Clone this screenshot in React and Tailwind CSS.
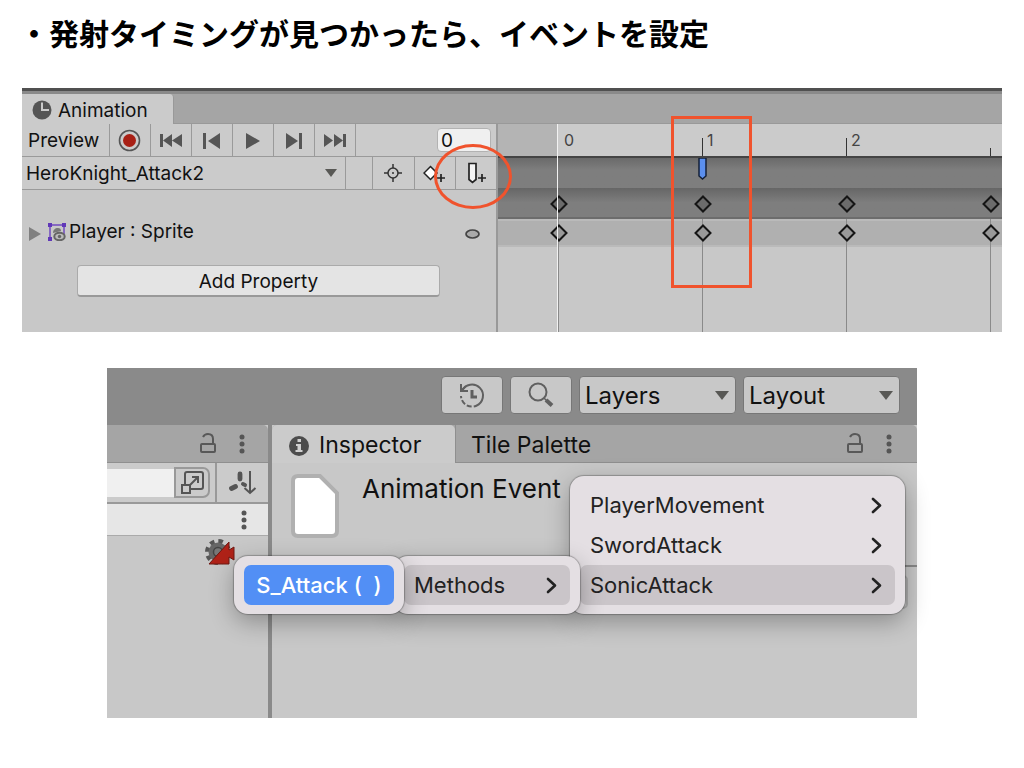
import React, { useState } from 'react';

const transport = [
  { label: 'First frame', d: 'M1 3h3v13H1zM13 3v13L4 9.500zM23 3v13l-10-6.500z' },
  { label: 'Previous frame', d: 'M3 2h3v16H3zM20 2v16L8 10z' },
  { label: 'Play', d: 'M5 2v16l14-8z' },
  { label: 'Next frame', d: 'M4 2v16l12-8zM17 2h3v16h-3z' },
  { label: 'Last frame', d: 'M1 3v13l9-6.500zM11 3v13l9-6.500zM20 3h3v13h-3z' },
];

const scripts = ['PlayerMovement', 'SwordAttack', 'SonicAttack'];

const toolButton = 'flex items-center justify-center border-l border-[#9a9a9a]';

const Arrow = ({ className }) => (
  <svg className={className} width="14" height="9" viewBox="0 0 14 9" aria-hidden="true">
    <path d="M0 0h14L7 9z" fill="#585855" />
  </svg>
);

const SmallArrow = ({ className }) => (
  <svg className={className} width="12" height="8" viewBox="0 0 12 8" aria-hidden="true">
    <path d="M0 0h12L6 8z" fill="#585855" />
  </svg>
);

const Dropdown = ({ label, options, className, selectClass, arrowClass, ArrowIcon = Arrow }) => (
  <div className={`relative flex items-center ${className}`}>
    <select
      aria-label={label}
      className={`h-full w-full appearance-none bg-transparent text-[#111] outline-none ${selectClass}`}
    >
      {options.map((option) => (
        <option key={option}>{option}</option>
      ))}
    </select>
    <ArrowIcon className={`pointer-events-none absolute ${arrowClass}`} />
  </div>
);

const Lock = () => (
  <svg width="18" height="22" viewBox="0 0 18 22" fill="none" stroke="#585858" strokeWidth="2" aria-hidden="true">
    <rect x="2" y="11" width="14" height="8" rx="1" />
    <path d="M4 4c1-2 3-3 5-3 3 0 5 2 5 5v5" />
  </svg>
);

const Dots = () => (
  <svg width="6" height="20" viewBox="0 0 6 20" fill="#555" aria-hidden="true">
    <circle cx="3" cy="3" r="2.500" />
    <circle cx="3" cy="10" r="2.500" />
    <circle cx="3" cy="17" r="2.500" />
  </svg>
);

const PaneActions = () => (
  <div className="ml-auto flex items-center gap-[22px]">
    <button aria-label="Lock"><Lock /></button>
    <button aria-label="More"><Dots /></button>
  </div>
);

const Key = ({ fill }) => (
  <svg className="relative -ml-2 shrink-0" width="18" height="18" viewBox="0 0 18 18" aria-hidden="true">
    <path d="M9 1.500l7.500 7.500L9 16.500 1.500 9z" fill={fill} stroke="#151515" strokeWidth="2" />
  </svg>
);

const KeyRow = ({ fill, className }) => (
  <div className={`flex items-center pl-[60px] ${className}`}>
    {[0, 1, 2, 3].map((frame) => (
      <div key={frame} className="flex w-36 shrink-0">
        <Key fill={fill} />
      </div>
    ))}
  </div>
);

const Chevron = () => (
  <svg width="12" height="18" viewBox="0 0 12 18" fill="none" stroke="#222" strokeWidth="2.600" strokeLinecap="round" strokeLinejoin="round" aria-hidden="true">
    <path d="M3 3l7 6.500L3 16" />
  </svg>
);

const Menu = ({ className, children }) => (
  <div
    role="menu"
    className={`relative rounded-[14px] bg-[#e4dfe3] px-[10px] py-[9px] shadow-[0_0_1px_1px_rgba(0,0,0,0.25),0_8px_24px_rgba(0,0,0,0.3)] ${className}`}
  >
    {children}
  </div>
);

const Timeline = () => (
  <div className="relative flex min-w-0 flex-1 flex-col overflow-hidden bg-[#c8c8c8]">
    <div className="flex h-[34px] border-b-2 border-[#444] bg-[#cbcbcb] text-base text-[#444]">
      <div className="w-[60px] shrink-0 bg-[#b4b4b4]" />
      <div className="w-36 shrink-0 pt-1 pl-[6px]">0</div>
      <div className="flex w-36 shrink-0 items-end">
        <span className="h-[18px] w-px bg-[#333]" />
        <span className="self-start pt-1 pl-1">1</span>
      </div>
      <div className="flex w-36 shrink-0 items-end">
        <span className="h-[18px] w-px bg-[#333]" />
        <span className="self-start pt-1 pl-1">2</span>
      </div>
      <div className="flex items-end">
        <span className="h-2 w-px bg-[#333]" />
      </div>
    </div>
    <div className="relative flex flex-1 flex-col">
      {/* frame lines run behind the keys */}
      <div className="absolute inset-0 flex pt-[60px] pl-[60px]">
        {[0, 1, 2, 3].map((frame) => (
          <div key={frame} className="relative z-10 w-36 shrink-0 border-l border-[#8a8a8a]" />
        ))}
      </div>
      <div className="flex h-[30px] bg-linear-to-b from-[#6a6a6a] to-[#7e7e7e] to-40% pl-[204px]">
        <svg className="-ml-1" width="9" height="22" viewBox="0 0 9 22" aria-hidden="true">
          <path d="M1 0v18l3.500 3 3.500-3V0z" fill="#5b8fee" stroke="#142038" strokeWidth="1.500" />
        </svg>
      </div>
      <KeyRow fill="#6b6b6b" className="relative z-20 h-[31px] border-b-2 border-[#6c6c6c] bg-linear-to-b from-[#666] to-[#7e7e7e] to-50% pt-[2px]" />
      <div className="h-7 border-t-2 border-b-2 border-t-[#bababa] border-b-[#bababa] bg-[#b0b0b0]" />
      <KeyRow fill="#999" className="relative z-20 -mt-7 h-7" />
    </div>
    <div className="absolute inset-y-0 left-[59px] z-30 w-px bg-[#f2f2f2]" />
  </div>
);

const AnimationWindow = () => {
  const [frame, setFrame] = useState('0');

  return (
    <section className="relative flex h-[244px] flex-col bg-[#c8c8c8] text-[19px] text-[#111]">
      <div className="h-[6px] border-t-[3px] border-[#505050] bg-[#8a8a8a]" />
      <div className="flex h-[30px] bg-[#a5a5a5]">
        <div className="flex w-[152px] items-center gap-[6px] rounded-tr-[4px] border-r border-[#999] bg-[#cbcbcb] pt-1 pl-[10px]">
          <svg width="20" height="20" viewBox="0 0 20 20" className="-mt-[2px]" aria-hidden="true">
            <circle cx="10" cy="10" r="9.500" fill="#555" />
            <path d="M10 2.500V10h7" fill="none" stroke="#cbcbcb" strokeWidth="2" />
          </svg>
          Animation
        </div>
        <div className="flex-1 border-b border-[#999]" />
      </div>
      <div className="flex min-h-0 flex-1">
        <div className="w-[476px] shrink-0 border-r-2 border-[#999]">
          <div className="flex h-[33px] border-b border-[#9a9a9a] bg-[#cbcbcb]">
            <button className="w-[87px] pt-[2px] pl-[6px] text-left">Preview</button>
            <button aria-label="Record" className={`w-[41px] ${toolButton}`}>
              <svg width="24" height="24" viewBox="0 0 24 24" aria-hidden="true">
                <circle cx="11.500" cy="12.500" r="10" fill="none" stroke="#555" strokeWidth="1.600" />
                <circle cx="11.500" cy="12.500" r="6.500" fill="#a82015" />
              </svg>
            </button>
            {transport.map(({ label, d }) => (
              <button key={label} aria-label={label} className={`w-[41px] ${toolButton}`}>
                <svg width="24" height="18" viewBox="0 0 24 18" fill="#555" aria-hidden="true">
                  <path d={d} />
                </svg>
              </button>
            ))}
            <div className="flex flex-1 items-center justify-end border-l border-[#9a9a9a] pr-[5px]">
              <input
                aria-label="Frame"
                value={frame}
                onChange={(e) => setFrame(e.target.value)}
                className="h-6 w-[54px] rounded-[4px] border border-[#b2b2b2] bg-[#f0f0f0] px-[3px] pt-[2px] outline-none"
              />
            </div>
          </div>
          <div className="flex h-[33px] border-b border-[#9a9a9a] bg-[#cbcbcb]">
            <Dropdown
              label="Clip"
              options={['HeroKnight_Attack2']}
              className="w-[323px]"
              selectClass="pt-[2px] pl-1"
              arrowClass="right-2"
              ArrowIcon={SmallArrow}
            />
            <div className="flex-1 border-l border-[#9a9a9a]" />
            <button aria-label="Filter by selection" className={`w-[42px] ${toolButton}`}>
              <svg width="20" height="18" viewBox="0 0 20 18" fill="none" stroke="#333" strokeWidth="1.500" aria-hidden="true">
                <circle cx="9" cy="9" r="5" />
                <path d="M9 0v4M9 14v4M0 9h4M14 9h4" />
                <circle cx="9" cy="9" r="1" fill="#333" stroke="none" />
              </svg>
            </button>
            <button aria-label="Add keyframe" className={`w-[41px] ${toolButton}`}>
              <svg width="24" height="20" viewBox="0 0 24 20" stroke="#222" strokeWidth="1.500" aria-hidden="true">
                <path d="M7.500 3.500l6.500 6.500-6.500 6.500L1 10z" fill="#fff" />
                <path d="M18 11v8M14 15h8" strokeWidth="1.700" />
              </svg>
            </button>
            <button aria-label="Add event" className={`w-[41px] ${toolButton}`}>
              <svg width="24" height="22" viewBox="0 0 24 22" stroke="#222" strokeWidth="1.700" aria-hidden="true">
                <path d="M5 1.500h7v16L8.500 20.500 5 17.500z" fill="#f4f4f4" />
                <path d="M18 12v8M14 16h8" strokeWidth="1.700" />
              </svg>
            </button>
          </div>
          <div className="flex items-center pt-7 pr-4 pl-[7px]">
            <svg width="12" height="14" viewBox="0 0 12 14" className="mt-1" aria-hidden="true">
              <path d="M0 0l12 7-12 7z" fill="#808080" />
            </svg>
            <svg width="18" height="18" viewBox="0 0 18 18" className="mr-[3px] ml-[7px]" aria-hidden="true">
              <path d="M2 2h14v9M2 2v14" fill="none" stroke="#7048c0" strokeWidth="1.500" />
              <path d="M0 0h4v4H0zM14 0h4v4h-4zM0 14h4v4H0z" fill="#6038b8" />
              <path d="M5 10c0-3 2-5 5-5 2 0 3 1 3 3z" fill="#777" />
              <ellipse cx="11.500" cy="13.500" rx="5.200" ry="3.800" fill="#bbb" stroke="#666" strokeWidth="2" />
              <circle cx="11.500" cy="13.500" r="1.700" fill="#666" />
            </svg>
            <span>Player : Sprite</span>
            <svg width="15" height="10" viewBox="0 0 15 10" className="mt-[3px] ml-auto" aria-hidden="true">
              <ellipse cx="7.500" cy="5" rx="6.500" ry="4" fill="#aaa" stroke="#444" strokeWidth="1.700" />
            </svg>
          </div>
          <button className="mt-[18px] ml-[55px] h-8 w-[363px] rounded-[4px] border border-b-2 border-[#aaa] border-b-[#999] bg-[#e4e4e4] pt-[2px]">
            Add Property
          </button>
        </div>
        <Timeline />
      </div>
      {/* callouts */}
      <div className="pointer-events-none absolute top-14 left-[412px] z-40 h-[65px] w-[78px] rounded-[50%] border-[3px] border-[#f0532d]" />
      <div className="pointer-events-none absolute top-7 left-[649px] z-40 h-[172px] w-[81px] border-[3px] border-[#f0532d]" />
    </section>
  );
};

const HierarchyPane = () => (
  <div className="w-[165px] shrink-0 border-r-4 border-[#8a8a8a] bg-[#c8c8c8]">
    <div className="flex h-[38px] items-center rounded-tr-[5px] border-b border-[#8f8f8f] bg-[#a5a5a5] pr-[23px]">
      <PaneActions />
    </div>
    <div className="flex h-[41px] items-center border-b-2 border-[#999] bg-[#cbcbcb]">
      <input aria-label="Search hierarchy" className="h-7 w-[67px] bg-[#f0f0f0] outline-none" />
      <button aria-label="Open search" className="flex h-[31px] w-9 items-center justify-center rounded-r-[7px] border-2 border-[#999]">
        <svg width="25" height="25" viewBox="0 0 25 25" fill="none" stroke="#555" strokeWidth="2" aria-hidden="true">
          <path d="M5 14V4q0-2 2-2h14q2 0 2 2v13q0 2-2 2H11" />
          <path d="M2 15h8v8H2zM10 15l8-8M12 7h6v6" />
        </svg>
      </button>
      <button aria-label="Sort" className="ml-[5px] flex h-full flex-1 items-center justify-center border-l-2 border-[#999]">
        <svg width="32" height="26" viewBox="0 0 32 26" fill="none" stroke="#555" aria-hidden="true">
          <path d="M13 4v5M4.500 18.500l4-2" strokeWidth="4.800" strokeLinecap="round" />
          <path d="M16 14l2 1" strokeWidth="4" strokeLinecap="round" />
          <path d="M23 1v22M17.500 18l5.500 5 5.500-5" strokeWidth="2" />
        </svg>
      </button>
    </div>
    <div className="flex h-8 items-center justify-end border-b border-[#aaa] bg-[#e6e6e6] pr-[21px]">
      <button aria-label="Scene options"><Dots /></button>
    </div>
    <div className="flex justify-end pt-[2px] pr-[32px]">
      <svg width="32" height="28" viewBox="0 0 32 28" aria-hidden="true">
        <circle cx="14" cy="14" r="10.500" fill="none" stroke="#555" strokeWidth="5" strokeDasharray="4.400 3.850" />
        <circle cx="14" cy="14" r="9.500" fill="#666" />
        <circle cx="14" cy="14" r="4.500" fill="#777" stroke="#444" strokeWidth="1.500" />
        <path d="M5 26L25 4v8l5-3v13l-5-3v7z" fill="#b02218" stroke="#6e1812" />
      </svg>
    </div>
  </div>
);

const EventMenu = () => (
  <div className="absolute top-[108px] right-3 flex items-end text-[22px] text-[#222]">
    <Menu className="z-30 -mr-[10px] w-[170px]">
      <button role="menuitem" className="h-10 w-full rounded-[7px] bg-[#528ff5] font-medium whitespace-pre text-white">
        {'S_Attack (  )'}
      </button>
    </Menu>
    <Menu className="z-20 -mr-[10px] w-[186px]">
      <button role="menuitem" className="flex h-10 w-full items-center justify-between rounded-[7px] bg-[#cac5c9] pr-[13px] pl-[10px]">
        Methods
        <Chevron />
      </button>
    </Menu>
    <Menu className="z-10 w-[335px]">
      {scripts.map((name) => (
        <button
          key={name}
          role="menuitem"
          className={`flex h-10 w-full items-center justify-between rounded-[7px] pr-[13px] pl-[10px] ${
            name === 'SonicAttack' ? 'bg-[#cac5c9]' : ''
          }`}
        >
          {name}
          <Chevron />
        </button>
      ))}
    </Menu>
  </div>
);

const InspectorPane = () => (
  <div className="min-w-0 flex-1 bg-[#c8c8c8]">
    <div className="flex h-[38px] rounded-t-[5px] bg-[#a5a5a5] text-[23px]">
      <div className="flex w-[183px] items-center gap-[10px] rounded-t-[5px] bg-[#cbcbcb] pt-[3px] pl-[17px]">
        <svg width="20" height="20" viewBox="0 0 20 20" aria-hidden="true">
          <circle cx="10" cy="10" r="10" fill="#4c4c4c" />
          <path d="M8.500 3h3.500v3H8.500zM7 8h5v6h1.500v2h-7v-2h2v-4H7z" fill="#d0d0d0" />
        </svg>
        Inspector
      </div>
      <div className="flex flex-1 items-center border-b border-l border-[#8f8f8f] pr-[25px] pl-[15px]">
        <span className="pt-1">Tile Palette</span>
        <PaneActions />
      </div>
    </div>
    <div className="flex h-[104px] border-b-2 border-[#888] pt-[11px] pl-[19px]">
      <svg width="48" height="64" viewBox="0 0 48 64" aria-hidden="true">
        <path d="M7 2h22l17 17v38q0 5-5 5H7q-5 0-5-5V7q0-5 5-5z" fill="#fff" stroke="#b0b0b0" strokeWidth="4" />
      </svg>
      <h2 className="ml-[23px] text-[26px] leading-[30px]">Animation Event</h2>
    </div>
    <div className="mt-2 mr-[9px] ml-4 h-[34px] rounded-[5px] border-2 border-[#aaa]" />
  </div>
);

const InspectorWindow = () => (
  <section className="relative mx-[85px] mt-9 flex h-[350px] flex-col bg-[#8a8a8a] text-[22px] text-[#111]">
    <div className="flex h-[57px] items-center justify-end gap-[7px] pr-[17px] pb-[3px]">
      <button aria-label="Undo history" className="flex h-[38px] w-[62px] items-center justify-center rounded-[4px] border border-[#777] bg-[#c8c8c8]">
        <svg width="26" height="26" viewBox="0 0 26 26" fill="none" stroke="#606060" strokeWidth="2" aria-hidden="true">
          <path d="M3 9A11 11 0 1 1 2 14" strokeDasharray="45 2 5 2 5 2 5 2" />
          <path d="M2 2v7h7M2 9l5-5" />
          <path d="M13 8v7h5" strokeWidth="3" />
        </svg>
      </button>
      <button aria-label="Search" className="flex h-[38px] w-[62px] items-center justify-center rounded-[4px] border border-[#777] bg-[#c8c8c8]">
        <svg width="26" height="26" viewBox="0 0 26 26" fill="none" stroke="#606060" aria-hidden="true">
          <circle cx="10" cy="10" r="8.500" strokeWidth="2" />
          <path d="M16 16l3 3" strokeWidth="1.500" />
          <path d="M18 18l6 5.500" strokeWidth="4" />
        </svg>
      </button>
      <Dropdown
        label="Layers"
        options={['Layers']}
        className="h-[38px] w-[157px] rounded-[4px] border border-[#777] bg-[#c8c8c8] text-2xl"
        selectClass="pt-[2px] pl-[5px]"
        arrowClass="right-[6px]"
      />
      <Dropdown
        label="Layout"
        options={['Layout']}
        className="h-[38px] w-[157px] rounded-[4px] border border-[#777] bg-[#c8c8c8] text-2xl"
        selectClass="pt-[2px] pl-[5px]"
        arrowClass="right-[6px]"
      />
    </div>
    <div className="flex flex-1">
      <HierarchyPane />
      <InspectorPane />
    </div>
    <EventMenu />
  </section>
);

export default function App() {
  return (
    <main className="min-h-screen bg-white px-[22px] pt-[10px] pb-12 font-['Inter','Noto_Sans_CJK_JP',sans-serif]">
      <h1 className="-ml-[3px] h-[78px] font-['Noto_Sans_CJK_JP',sans-serif] text-[30px] leading-[44px] font-bold text-black">
        ・発射タイミングが見つかったら、イベントを設定
      </h1>
      <AnimationWindow />
      <InspectorWindow />
    </main>
  );
}
